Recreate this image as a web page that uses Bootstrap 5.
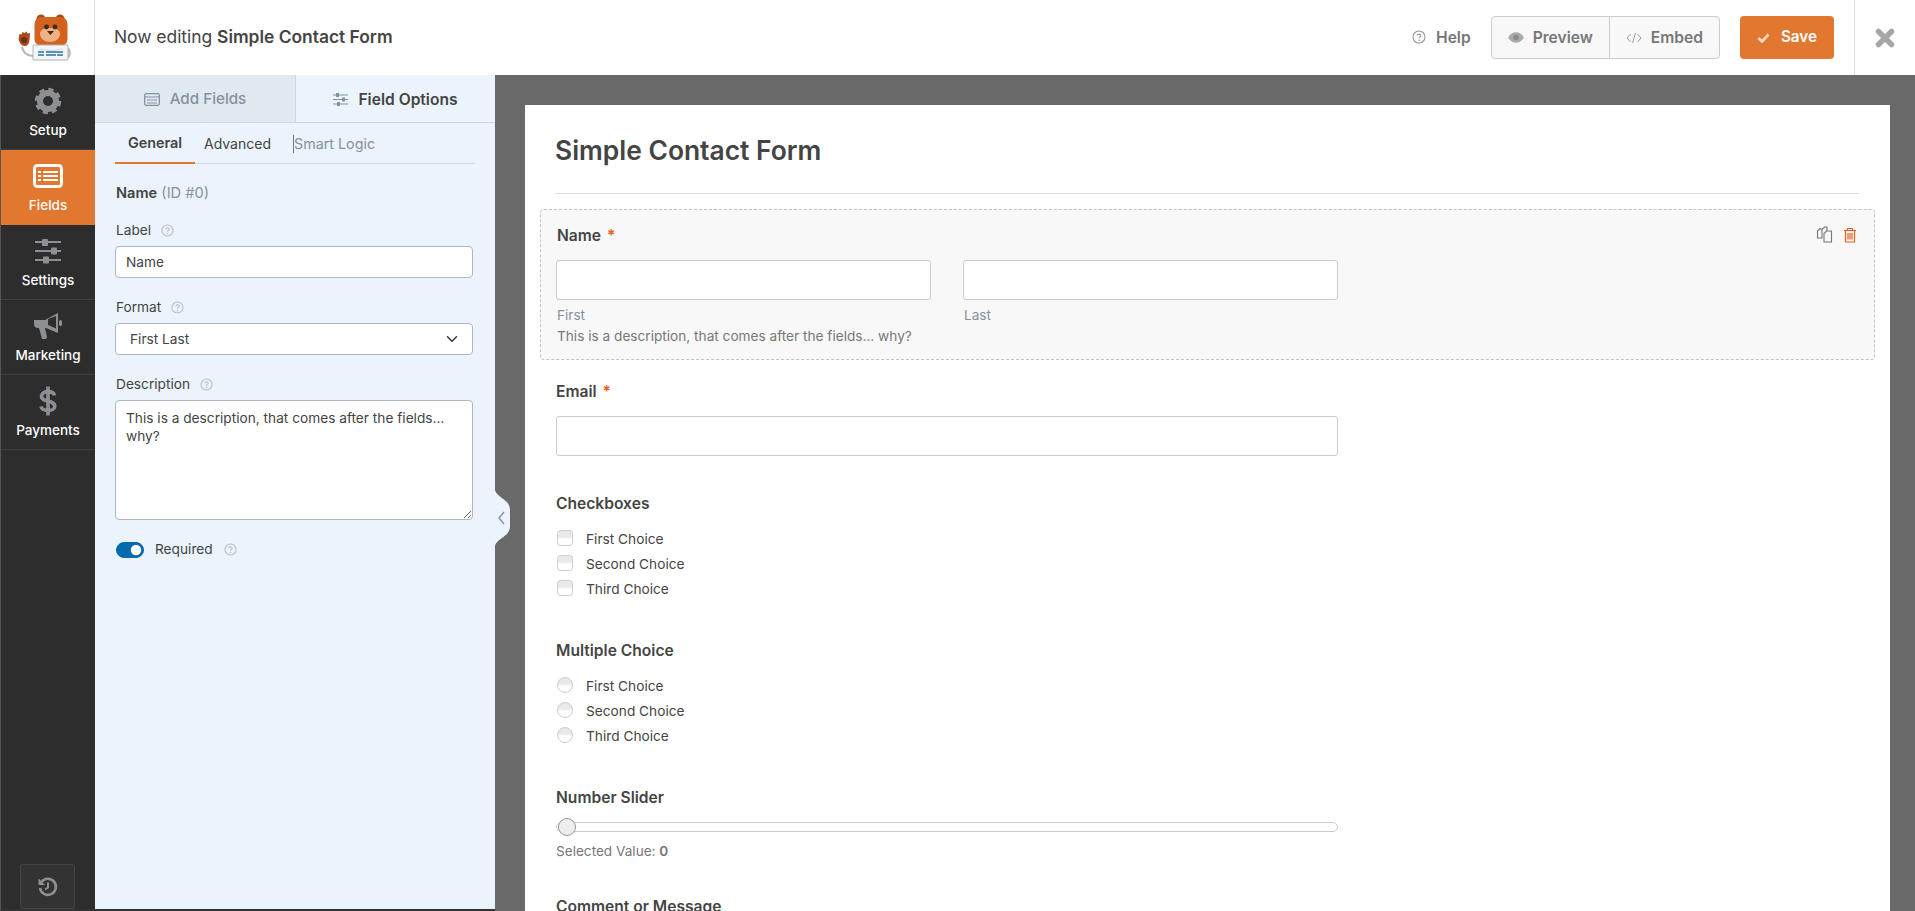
<!doctype html>
<html lang="en">
<head>
<meta charset="utf-8">
<title>Simple Contact Form</title>
<link rel="stylesheet" href="https://cdn.jsdelivr.net/npm/bootstrap@5.3.0/dist/css/bootstrap.min.css">
<style>
html,body{height:100%;overflow:hidden}
body{font-family:Inter,"Liberation Sans",sans-serif;color:#444;font-size:14px;background:#696969}
.wf-top{height:75px;background:#fff}
.wf-logo{width:95px;border-right:1px solid #ddd}
.wf-title{padding-left:19px;font-size:17.4px;color:#444}
.wf-title b{font-weight:600}
.wf-help{color:#777;font-weight:600;font-size:15.6px;margin-right:20px}
.wf-help svg{margin-right:10px}
.wf-group{height:43px;margin-right:20px;border:1px solid #ccc;border-radius:4px;background:#f8f8f8}
.wf-gbtn{color:#777;font-weight:600;font-size:15.6px;height:100%;padding:0 16px;gap:9px}
.wf-gbtn+.wf-gbtn{border-left:1px solid #ccc}
.wf-save{width:94px;height:43px;background:#e27730;color:#fff;font-weight:600;font-size:15.3px;border-radius:4px;gap:11px}
.wf-close{width:61px;height:75px;border-left:1px solid #ddd;margin-left:20px}
.wf-body{height:836px}
.wf-side{width:95px;background:#2d2d2d;border-left:1px solid #555;border-bottom:2px solid #333}
.wf-item{height:75px;border-bottom:1px solid #3f3f3f;color:#fff;font-size:13.5px;font-weight:500;padding-top:12px}
.wf-item svg{height:28px;display:block;margin-bottom:5px}
.wf-item svg.wf-tall{height:34px;margin-top:-3px;margin-bottom:2px}
.wf-item.wf-on{background:#e27730;border-bottom-color:#e27730}
.wf-hist{width:55px;height:45px;margin:auto 0 0 19px;border:1px solid #444;border-radius:3px;background:#333}
.wf-panel{width:400px;background:#ebf3fc;position:relative;border-bottom:2px solid #333}
.wf-tabs{height:48px;border-bottom:1px solid #ced7e0}
.wf-tab{width:200px;font-size:15.2px;font-weight:500;color:#86919e;background:#e0e8f0;gap:10px;padding-top:2px}
.wf-tab.wf-cur{background:#ebf3fc;color:#444;font-weight:600;font-size:15.6px;border-left:1px solid #ced7e0}
.wf-sub{margin:0 20px;height:41px;border-bottom:1px solid #ced7e0;font-size:14px}
.wf-sublink{height:41px;padding:0 12px 0 0;color:#444;display:flex;align-items:center}
.wf-sublink.wf-act{font-weight:600;font-size:14.4px;width:80px;padding:0;justify-content:center;border-bottom:2px solid #e27730;margin-right:9px}
.wf-sublink.wf-off{color:#86919e;margin-left:10px;font-size:14.3px}
.wf-caret{display:inline-block;width:1px;height:18px;background:#777}
.wf-opts{padding:21px 22px 0 20px;font-size:13.7px;line-height:17px}
.wf-opts .form-control,.wf-opts .form-select{height:32px;border:1px solid #b0b6bd;border-radius:4px;font-size:13.7px;color:#444;padding:0 10px;box-shadow:none}
.wf-opts .form-select{padding-left:14px}
.wf-opts textarea.form-control{height:120px;padding:8px 10px;line-height:18px}
.wf-opts .form-label{margin:0 0 7px;padding-left:1px;display:flex;align-items:center;gap:10px}
.wf-grp{margin-bottom:21px}
.wf-idline{margin-bottom:20px;padding-left:1px;font-size:14.6px}
.wf-idline b{font-weight:600}
.wf-idline span{color:#86919e}
.wf-sw{padding:0 0 0 1px;margin:0;min-height:0;gap:11px}
.wf-sw .form-check-input{margin:0;width:28px;height:16px;background-color:#036aab;border-color:#036aab;float:none}
.wf-flip{position:absolute;left:400px;top:415px;display:block}
.wf-stage{padding:30px 25px 0 30px;min-width:0;overflow:hidden}
.wf-paper{background:#fff;height:806px;overflow:hidden;padding:0 31px 0 15px;position:relative}
.wf-h{margin:0;padding:30px 0 0 15px;height:88px;font-size:26.4px;font-weight:600;color:#444;line-height:30px}
.wf-rule{margin:0 0 15px 15px;border:0;border-top:1px solid #ddd;opacity:1}
.wf-field{padding:0 16px;margin:0 -16px 0 0}
.wf-selected{height:151px;margin:0 -16px 0 0;padding-top:16px;background:#f8f8f8;border:1px dashed #c4c4c4;border-radius:4px;position:relative}
.wf-selected .wf-field{padding-left:15px}
.wf-selected .wf-flabel{padding-left:1px;margin-bottom:14px}
.wf-selected .wf-sublab,.wf-selected .wf-desc{padding-left:1px}
.wf-flabel{font-weight:600;font-size:15.6px;color:#444;line-height:20px;margin:0 0 15px}
.wf-flabel i{font-style:normal;color:#e2601c;margin-left:2px}
.wf-in{height:40px;border:1px solid #ccc;border-radius:3px;background:#fff;box-shadow:none}
.wf-half{width:375px}
.wf-sublab{font-size:13.6px;color:#86919e;line-height:16px;margin-top:7px;padding-left:1px}
.wf-desc{font-size:13.65px;color:#777;line-height:16px;margin-top:5px}
.wf-actions{position:absolute;right:17px;top:16px;gap:10px}
.wf-choice{height:25px;font-size:13.7px;color:#444;margin:0;padding:0;min-height:0;display:flex;align-items:center;gap:13px}
.wf-choice .form-check-input{float:none;margin:-4px 0 0 1px;width:16px;height:16px;border:1px solid #ccc;background:linear-gradient(#e9e9e9 0 40%,#fff 60%);flex:none}
.wf-range{width:782px;height:10px;border:1px solid #ccc;border-radius:5px;position:relative;margin-top:14px;background:#fff}
.wf-thumb{position:absolute;left:1px;top:-5px;width:18px;height:18px;border-radius:50%;background:#eee;border:1px solid #999}
.wf-sv{font-size:13.6px;color:#777;margin-top:11px;line-height:16px}
.wf-sv b{font-weight:600}
.wf-email{margin-top:22px}
.wf-email .wf-flabel{margin-bottom:14px}
.wf-wide{width:782px}
.wf-cb{margin-top:38px}
.wf-cb .wf-flabel{margin-bottom:13px}
.wf-mc{margin-top:39px}
.wf-mc .wf-flabel{margin-bottom:13px}
.wf-ns{margin-top:39px}
.wf-cm{margin-top:38px}
</style>
</head>
<body>
<header class="wf-top d-flex align-items-center">
  <div class="wf-logo h-100 d-flex align-items-center justify-content-center">
    <svg width="58" height="48" viewBox="0 0 58 48" aria-label="Bear logo">
      <circle cx="23" cy="5" r="4.500" fill="#a9481a"/><circle cx="42" cy="5" r="4.500" fill="#a9481a"/>
      <path d="M49 34a6 6 0 0 1 0 10" fill="none" stroke="#b5b8bc" stroke-width="2.200"/>
      <path d="M4 33c1 5 5 9 11 9" fill="none" stroke="#b5b8bc" stroke-width="2.200"/>
      <rect x="16.500" y="3" width="33" height="29" rx="7" fill="#d4611e"/>
      <path d="M0.500 25l1-5 2 .5 1-2.500 2 1 2-1.500 1 2 2.500-.5-.5 7c-.5 4-2 6-5 6s-5-3-6-7z" fill="#a9481a"/>
      <circle cx="6" cy="26" r="3" fill="#6e2f0e"/>
      <path d="M22 20c0-5 5-6 10-6s10 1 10 6-5 8-10 8-10-3-10-8z" fill="#f0b184"/>
      <circle cx="28.500" cy="13" r="2.400" fill="#2f2f2f"/><circle cx="37" cy="13" r="2.400" fill="#2f2f2f"/>
      <path d="M29 17h7l-3.500 4z" fill="#4d2610"/>
      <path d="M16 31l17 3 16-3v2l-16 4-17-3z" fill="#e6e8ea"/>
      <rect x="15" y="31" width="35" height="15" rx="1" fill="#f4f5f7" stroke="#aeb1b5"/>
      <path d="M22 35l11 2 11-2" fill="none" stroke="#d4d6d9"/>
      <path d="M20 38h6M28 38h17M20 41h6M28 41h10M39 41h6" stroke="#2271b1" stroke-width="1.400"/>
    </svg>
  </div>
  <div class="wf-title">Now editing <b>Simple Contact Form</b></div>
  <div class="ms-auto d-flex align-items-center">
    <div class="wf-help d-flex align-items-center">
      <svg width="14" height="14" viewBox="0 0 14 14"><circle cx="7" cy="7" r="6" fill="none" stroke="#999" stroke-width="1.100"/><path d="M5.200 5.500C5.300 3.500 8.900 3.600 8.800 5.600 8.700 7 7 6.800 7 8.300" fill="none" stroke="#999" stroke-width="1.200"/><circle cx="7" cy="10.200" r=".8" fill="#999"/></svg>Help
    </div>
    <div class="wf-group d-flex align-items-center">
      <div class="wf-gbtn d-flex align-items-center">
        <svg width="16" height="11" viewBox="0 0 16 11"><path d="M0 5.500C4 -1.500 12 -1.500 16 5.500 12 12.500 4 12.500 0 5.500z" fill="#aaa"/><circle cx="8" cy="5.500" r="2.800" fill="#8a8a8a"/></svg>Preview
      </div>
      <div class="wf-gbtn d-flex align-items-center">
        <svg width="16" height="12" viewBox="0 0 16 12"><path d="M4.500 2L1 6l3.500 4M11.500 2L15 6l-3.500 4M9.500 1L6.500 11" fill="none" stroke="#999" stroke-width="1"/></svg>Embed
      </div>
    </div>
    <div class="wf-save d-flex align-items-center justify-content-center">
      <svg width="13" height="10" viewBox="0 0 13 10"><path d="M1.500 5l3.500 3.500L11.500 1.500" fill="none" stroke="#f8dcc8" stroke-width="2.600"/></svg>Save
    </div>
    <div class="wf-close d-flex align-items-center justify-content-center">
      <svg width="20" height="20" viewBox="0 0 20 20"><path d="M3.500 3.500l13 13M16.500 3.500l-13 13" stroke="#a6a6a6" stroke-width="5.500" stroke-linecap="round"/></svg>
    </div>
  </div>
</header>

<div class="wf-body d-flex">
  <nav class="wf-side d-flex flex-column flex-shrink-0">
    <div class="wf-item d-flex flex-column align-items-center">
      <svg width="28" height="28" viewBox="0 0 28 28"><circle cx="14" cy="14" r="8" fill="none" stroke="#8c8f94" stroke-width="6"/><circle cx="14" cy="14" r="11.500" fill="none" stroke="#8c8f94" stroke-width="3.500" stroke-dasharray="5.030 4"/></svg>
      Setup
    </div>
    <div class="wf-item wf-on d-flex flex-column align-items-center">
      <svg width="30" height="28" viewBox="0 0 30 28"><rect x="1.500" y="3.500" width="27" height="21" rx="3" fill="none" stroke="#fff" stroke-width="3"/><path d="M5 10h3M10 10h15M5 14h3M10 14h15M5 18h3M10 18h15" stroke="#fff" stroke-width="1.800"/></svg>
      Fields
    </div>
    <div class="wf-item d-flex flex-column align-items-center">
      <svg width="28" height="28" viewBox="0 0 28 28"><g stroke="#8c8f94" stroke-width="1.800"><path d="M1 5h26M1 14h26M1 23h26"/></g><g fill="#8c8f94"><rect x="8" y="2" width="6" height="7" rx="1"/><rect x="17" y="10.500" width="6" height="7" rx="1"/><rect x="9" y="19.500" width="6" height="7" rx="1"/></g></svg>
      Settings
    </div>
    <div class="wf-item d-flex flex-column align-items-center">
      <svg width="32" height="28" viewBox="0 0 32 28"><path d="M2 8h11L26 1v20l-12-5h-1l2 9-1 2H10L7 16H6a4 4 0 0 1-4-4z" fill="#8c8f94"/><path d="M16 7v6l8 3.500V4z" fill="#2d2d2d"/><rect x="27" y="8" width="3" height="6" rx="1.500" fill="#8c8f94"/></svg>
      Marketing
    </div>
    <div class="wf-item d-flex flex-column align-items-center">
      <svg class="wf-tall" width="20" height="34" viewBox="0 0 20 34"><path d="M16.500 11.500C15.500 6.500 4 6 3.500 12 3 18.500 17 15.500 16.800 22.500 16.500 28 4 27.500 3 22.500M10 2.500v29" fill="none" stroke="#8c8f94" stroke-width="3.600"/></svg>
      Payments
    </div>
    <div class="wf-hist d-flex align-items-center justify-content-center">
      <svg width="22" height="22" viewBox="0 0 22 22"><path d="M4.500 6A8 8 0 1 1 3 12" fill="none" stroke="#8c8f94" stroke-width="2.600"/><path d="M1.500 2.500v6.500H8z" fill="#8c8f94"/><path d="M11 6.500v5l-3 2" fill="none" stroke="#8c8f94" stroke-width="2"/></svg>
    </div>
  </nav>

  <aside class="wf-panel flex-shrink-0">
    <div class="wf-tabs d-flex">
      <div class="wf-tab d-flex align-items-center justify-content-center">
        <svg width="16" height="13" viewBox="0 0 16 13"><rect x=".7" y=".7" width="14.600" height="11.600" rx="1.500" fill="none" stroke="#86919e" stroke-width="1.300"/><path d="M1 4h14M3 7h10M3 10h10" stroke="#86919e"/></svg>Add Fields
      </div>
      <div class="wf-tab wf-cur d-flex align-items-center justify-content-center">
        <svg width="15" height="13" viewBox="0 0 15 13"><path d="M0 2h15M0 6.500h15M0 11h15" stroke="#86919e"/><rect x="3" y="0" width="3" height="4" fill="#86919e"/><rect x="9" y="4.500" width="3" height="4" fill="#86919e"/><rect x="4" y="9" width="3" height="4" fill="#86919e"/></svg>Field Options
      </div>
    </div>
    <div class="wf-sub d-flex">
      <div class="wf-sublink wf-act">General</div>
      <div class="wf-sublink">Advanced</div>
      <div class="wf-sublink wf-off"><span class="wf-caret"></span>Smart Logic</div>
    </div>
    <div class="wf-opts">
      <div class="wf-idline"><b>Name</b> <span>(ID #0)</span></div>
      <div class="wf-grp">
        <label class="form-label">Label <svg width="13" height="13" viewBox="0 0 14 14"><circle cx="7" cy="7" r="6" fill="none" stroke="#b5bcc4" stroke-width="1.100"/><path d="M5.200 5.500C5.300 3.500 8.900 3.600 8.800 5.600 8.700 7 7 6.800 7 8.300" fill="none" stroke="#b5bcc4" stroke-width="1.200"/><circle cx="7" cy="10.200" r=".8" fill="#b5bcc4"/></svg></label>
        <input class="form-control" type="text" value="Name">
      </div>
      <div class="wf-grp">
        <label class="form-label">Format <svg width="13" height="13" viewBox="0 0 14 14"><circle cx="7" cy="7" r="6" fill="none" stroke="#b5bcc4" stroke-width="1.100"/><path d="M5.200 5.500C5.300 3.500 8.900 3.600 8.800 5.600 8.700 7 7 6.800 7 8.300" fill="none" stroke="#b5bcc4" stroke-width="1.200"/><circle cx="7" cy="10.200" r=".8" fill="#b5bcc4"/></svg></label>
        <select class="form-select"><option>First Last</option></select>
      </div>
      <div class="wf-grp">
        <label class="form-label">Description <svg width="13" height="13" viewBox="0 0 14 14"><circle cx="7" cy="7" r="6" fill="none" stroke="#b5bcc4" stroke-width="1.100"/><path d="M5.200 5.500C5.300 3.500 8.900 3.600 8.800 5.600 8.700 7 7 6.800 7 8.300" fill="none" stroke="#b5bcc4" stroke-width="1.200"/><circle cx="7" cy="10.200" r=".8" fill="#b5bcc4"/></svg></label>
        <textarea class="form-control">This is a description, that comes after the fields... why?</textarea>
      </div>
      <div class="form-check form-switch wf-sw d-flex align-items-center">
        <input class="form-check-input" type="checkbox" role="switch" checked>
        <span>Required</span>
        <svg width="13" height="13" viewBox="0 0 14 14"><circle cx="7" cy="7" r="6" fill="none" stroke="#b5bcc4" stroke-width="1.100"/><path d="M5.200 5.500C5.300 3.500 8.900 3.600 8.800 5.600 8.700 7 7 6.800 7 8.300" fill="none" stroke="#b5bcc4" stroke-width="1.200"/><circle cx="7" cy="10.200" r=".8" fill="#b5bcc4"/></svg>
      </div>
    </div>
    <svg class="wf-flip" width="15" height="56" viewBox="0 0 15 56"><path d="M0 0C2 8 15 9 15 20V36C15 47 2 48 0 56z" fill="#ebf3fc"/><path d="M9 22l-5 6 5 6" fill="none" stroke="#86919e" stroke-width="1.300"/></svg>
  </aside>

  <main class="wf-stage flex-grow-1">
    <div class="wf-paper">
      <h1 class="wf-h">Simple Contact Form</h1>
      <hr class="wf-rule">
      <div class="wf-selected">
        <div class="wf-field">
          <div class="wf-flabel">Name <i>*</i></div>
          <div class="d-flex gap-4">
            <div class="wf-half"><input class="form-control wf-in" type="text" aria-label="First"><div class="wf-sublab">First</div></div>
            <div class="wf-half ms-2"><input class="form-control wf-in" type="text" aria-label="Last"><div class="wf-sublab">Last</div></div>
          </div>
          <div class="wf-desc">This is a description, that comes after the fields... why?</div>
        </div>
        <div class="wf-actions d-flex align-items-center">
          <svg width="17" height="17" viewBox="0 0 17 17"><path d="M6 3.500L8.500 1H11v4M6 3.500V12H1.500V5L4 2.500z" fill="none" stroke="#777" stroke-width="1.100"/><path d="M8 7.500L10.500 5H15.500V16H8z" fill="#f8f8f8" stroke="#777" stroke-width="1.100"/></svg>
          <svg width="14" height="16" viewBox="0 0 14 16"><path d="M1 3.500h12M4.500 3.500V1.500h5v2M2.500 3.500V15h9V3.500M5 6v6.500M7 6v6.500M9 6v6.500" fill="none" stroke="#e2601c" stroke-width="1.200"/></svg>
        </div>
      </div>

      <div class="wf-field wf-email">
        <div class="wf-flabel">Email <i>*</i></div>
        <input class="form-control wf-in wf-wide" type="text" aria-label="Email">
      </div>

      <div class="wf-field wf-cb">
        <div class="wf-flabel">Checkboxes</div>
        <label class="wf-choice form-check"><input class="form-check-input" type="checkbox">First Choice</label>
        <label class="wf-choice form-check"><input class="form-check-input" type="checkbox">Second Choice</label>
        <label class="wf-choice form-check"><input class="form-check-input" type="checkbox">Third Choice</label>
      </div>

      <div class="wf-field wf-mc">
        <div class="wf-flabel">Multiple Choice</div>
        <label class="wf-choice form-check"><input class="form-check-input" type="radio" name="mc">First Choice</label>
        <label class="wf-choice form-check"><input class="form-check-input" type="radio" name="mc">Second Choice</label>
        <label class="wf-choice form-check"><input class="form-check-input" type="radio" name="mc">Third Choice</label>
      </div>

      <div class="wf-field wf-ns">
        <div class="wf-flabel mb-0">Number Slider</div>
        <div class="wf-range"><span class="wf-thumb"></span></div>
        <div class="wf-sv">Selected Value: <b>0</b></div>
      </div>

      <div class="wf-field wf-cm">
        <div class="wf-flabel">Comment or Message</div>
      </div>
    </div>
  </main>
</div>
<script src="https://cdn.jsdelivr.net/npm/bootstrap@5.3.0/dist/js/bootstrap.bundle.min.js"></script>
</body>
</html>
